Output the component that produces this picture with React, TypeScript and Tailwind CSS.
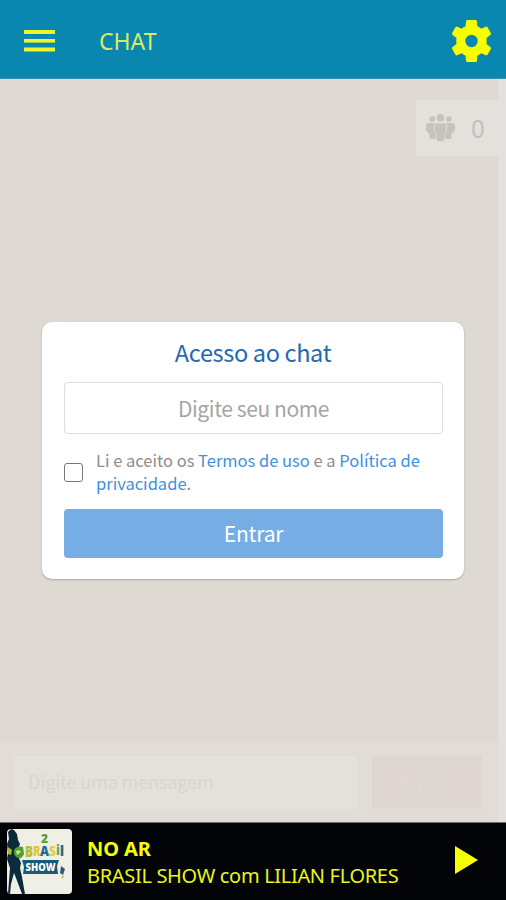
import React from "react";

function MenuIcon() {
  return (
    <svg width="31" height="22" viewBox="0 0 31 22" fill="#eef52a">
      <rect y="0" width="31" height="4" />
      <rect y="9" width="31" height="3.6" />
      <rect y="17.5" width="31" height="4" />
    </svg>
  );
}

function GearIcon() {
  return (
    <svg width="39" height="42" viewBox="0 0 39 42" fill="#f6ff00">
      <path
        fillRule="evenodd"
        d="M14 1.500Q14.200 0 15.500 0H23.500Q24.800 0 25 1.500L25.400 6.300Q27.600 7.200 29.300 8.700L33.800 6.700Q35 6.300 35.700 7.400L38.800 13Q39.300 14.200 38.300 15L34.500 18Q34.900 21 34.500 24L38.300 27Q39.300 27.800 38.800 29L35.700 34.600Q35 35.700 33.800 35.300L29.300 33.300Q27.600 34.800 25.400 35.700L25 40.500Q24.800 42 23.500 42H15.500Q14.200 42 14 40.500L13.600 35.700Q11.400 34.800 9.700 33.300L5.200 35.300Q4 35.700 3.300 34.600L0.200 29Q-0.300 27.800 0.700 27L4.500 24Q4.100 21 4.500 18L0.700 15Q-0.300 14.200 0.200 13L3.300 7.400Q4 6.300 5.200 6.700L9.700 8.700Q11.400 7.200 13.600 6.300ZM19.500 14.800a6.200 6.200 0 1 0 0 12.400a6.200 6.200 0 1 0 0-12.400Z"
      />
    </svg>
  );
}

function PeopleIcon() {
  return (
    <svg width="29" height="28" viewBox="0 0 29 28" fill="#c6c3be">
      <circle cx="6.2" cy="5" r="2.8" />
      <circle cx="22.8" cy="5" r="2.8" />
      <path d="M3 9h6.2q-1.3 1.2-1.3 3v6l2.2 2.2V23q0 2-2 2H5.5q-2 0-2-2v-3.5Q0 18.5 0 15v-3q0-3 3-3z" />
      <path d="M26 9h-6.2q1.3 1.2 1.3 3v6l-2.2 2.2V23q0 2 2 2h2.6q2 0 2-2v-3.5Q29 18.500 29 15v-3q0-3-3-3z" />
      <circle cx="14.500" cy="3.800" r="3.800" />
      <path d="M11.500 9h6q3 0 3 3v5q0 2-1.700 2.500V25q0 2.500-2.500 2.500h-3.600q-2.500 0-2.500-2.500v-5.500Q8.500 19 8.500 17v-5q0-3 3-3z" stroke="#e4e0db" strokeWidth=".5" />
    </svg>
  );
}

function CoverArt() {
  return (
    <svg width="65" height="65" viewBox="0 0 65 65" className="block rounded-[4px]">
      <rect width="65" height="65" fill="#f0efe6" />
      <path d="M1 3l3-3 3 1 3 4 1 6 2 4-2 5v7l3 7-1 5 2 9 3 17h-3L9 49l-2-5-3 11-1 10H1l1-13 1-13-3-9 1-6-1-9 2-5z" fill="#0b2b3c" />
      <path d="M1 18l4 3-1 5-3-1z" fill="#b6b332" />
      <path d="M7 21q3-5 9-3l1 7q-2 5-6 4-5-2-4-8z" fill="#4d9c3d" />
      <path d="M9 22q3-2 5 1l-4 3z" fill="#dae363" />
      <g fontFamily="'Open Sans', 'Noto Sans', sans-serif" fontWeight="800">
        <text x="34" y="14" fontSize="13" fill="#5c9d35" textLength="7" lengthAdjust="spacingAndGlyphs">2</text>
        <text x="18" y="28" fontSize="15" fill="#b5bd37" textLength="8" lengthAdjust="spacingAndGlyphs">B</text>
        <text x="26" y="27" fontSize="14" fill="#dfc62f" textLength="7.500" lengthAdjust="spacingAndGlyphs">R</text>
        <text x="33" y="27" fontSize="14" fill="#21699a" textLength="9" lengthAdjust="spacingAndGlyphs">A</text>
        <text x="42" y="27" fontSize="14" fill="#e5cc45" textLength="7" lengthAdjust="spacingAndGlyphs">S</text>
        <text x="49" y="26" fontSize="14" fill="#6aaa55" textLength="4" lengthAdjust="spacingAndGlyphs">i</text>
        <text x="53" y="27" fontSize="14" fill="#256487" textLength="4" lengthAdjust="spacingAndGlyphs">l</text>
      </g>
      <path d="M15 31h37l-2 6 1 8H16l1-7z" fill="#155a77" />
      <text x="18.500" y="41.500" fontFamily="'Open Sans', sans-serif" fontSize="10.500" fontWeight="800" fill="#fff" textLength="30" lengthAdjust="spacingAndGlyphs">SHOW</text>
      <path d="M54 37l4 3-2 6-3-2z" fill="#285b8c" />
      <path d="M54 48l3-2-1 4z" fill="#cbc542" />
    </svg>
  );
}

export default function App() {
  return (
    <div className="flex h-[900px] w-[506px] flex-col overflow-hidden bg-[#dfd9d4] font-['Noto_Sans','Open_Sans',sans-serif]">
      <header className="flex h-[79px] shrink-0 items-center border-b border-[#3792b3] bg-[#0a87b0] pt-[3px] pr-[15px] pl-6">
        <MenuIcon />
        <h1 className="ml-[44px] text-[23px] leading-8 text-[#d5ec62]">CHAT</h1>
        <div className="ml-auto">
          <GearIcon />
        </div>
      </header>

      <main className="flex h-[743px] shrink-0 font-['Noto_Sans_CJK_SC','Noto_Sans',sans-serif]">
        <div className="flex w-[498px] shrink-0 flex-col">
          <div className="mt-[21px] ml-auto flex h-[56px] w-[82px] items-center rounded-l-[3px] bg-[#e4e0db] pl-[10px]">
            <PeopleIcon />
            <span className="ml-[16px] pb-[2px] text-[25px] leading-8 tracking-[-0.5px] text-[#c3c0bb]">0</span>
          </div>

          <section className="mt-[166px] ml-[42px] flex h-[257px] w-[422px] shrink-0 flex-col rounded-[10px] bg-white px-[22px] shadow-[0_1px_2px_#aaa6a2]">
            <h2 className="mt-[14px] text-center text-[23.5px] leading-8 tracking-[-0.33px] text-[#2468b0]">Acesso ao chat</h2>
            <input
              className="mt-[14px] h-[52px] w-[379px] rounded-[4px] border border-[#dedede] bg-white text-center text-[21px] tracking-[-0.42px] outline-none placeholder:text-[#a5a5a5]"
              placeholder="Digite seu nome"
            />
            <div className="mt-[15px] flex h-[46px] items-center">
              <input type="checkbox" className="h-[19px] w-[19px] shrink-0 appearance-none rounded-[3px] border-[1.500px] border-[#777] bg-white" />
              <p className="ml-[13px] whitespace-nowrap text-[16.5px] leading-[23px] text-[#8d8d8d]">
                Li e aceito os <a className="text-[#3f91df]">Termos de uso</a> e a <a className="text-[#3f91df]">Política de<br />privacidade</a>.
              </p>
            </div>
            <button className="mt-[14px] h-[49px] w-[379px] rounded-[4px] bg-[#75ade4] text-[21px] tracking-[-0.2px] text-white">Entrar</button>
          </section>

          <div className="mt-auto flex h-[80px] shrink-0 items-center bg-[#e1dcd7] pl-[14px]">
            <div className="flex h-[53px] w-[343px] items-center bg-[#e4e0db] pb-[2px] pl-[14px] text-[18px] tracking-[-0.1px] text-[#d9d5d0]">Digite uma mensagem</div>
            <div className="ml-[15px] flex h-[53px] w-[110px] items-center justify-center bg-[#dfd6d3] text-[19px] text-[#e0dad5]">Enviar</div>
          </div>
        </div>
        <div className="grow bg-[#e4e0dd]" />
      </main>

      <footer className="flex h-[78px] shrink-0 items-center border-t border-[#706e6c] bg-[#020407] pr-7 pl-[7px] text-[#eaf51b]">
        <CoverArt />
        <div className="ml-[15px] whitespace-nowrap text-[20px] leading-[27px]">
          <p className="font-bold tracking-[-0.1px] text-[#f6ff08]">NO AR</p>
          <p className="tracking-[-0.32px]">BRASIL SHOW com LILIAN FLORES</p>
        </div>
        <svg width="23" height="28" viewBox="0 0 23 28" className="mb-[3px] ml-auto" fill="#f8ff00">
          <path d="M0 0L23 14L0 28z" />
        </svg>
      </footer>
    </div>
  );
}
